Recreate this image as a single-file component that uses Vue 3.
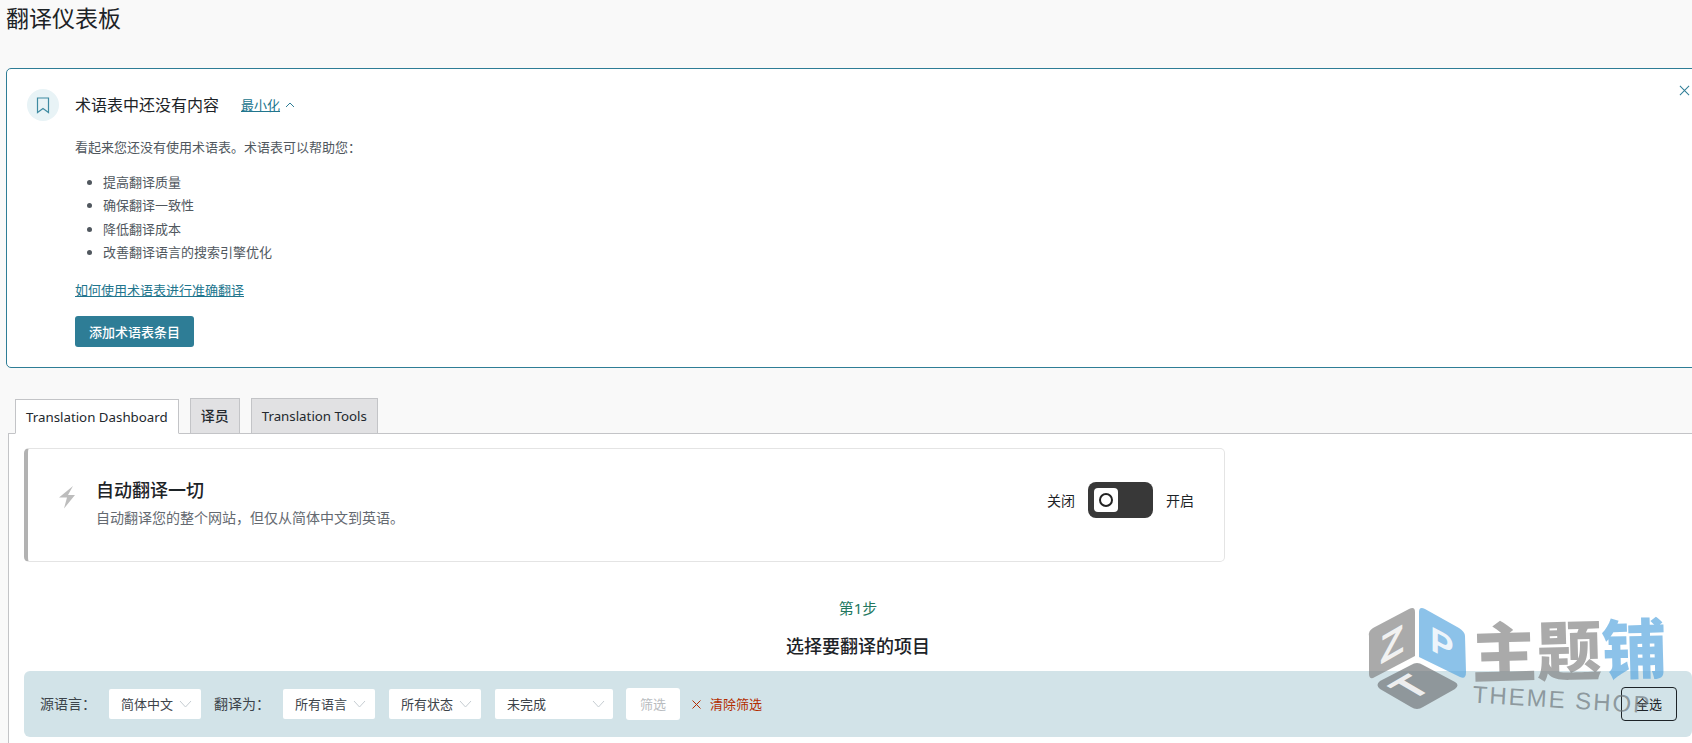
<template>
  <div class="page">
    <h1 class="page-title">翻译仪表板</h1>

    <section class="notice">
      <button class="notice-close" aria-label="关闭">
        <svg width="11" height="11" viewBox="0 0 12 12"><path d="M1 1l10 10M11 1L1 11" /></svg>
      </button>
      <div class="notice-head">
        <span class="notice-icon">
          <svg width="14" height="17" viewBox="0 0 14 17"><path d="M1.500 1h11v14.500L7 11.600 1.500 15.500z" /></svg>
        </span>
        <strong class="notice-title">术语表中还没有内容</strong>
        <a class="link minimize">最小化</a>
        <svg class="minimize-arrow" width="10" height="6" viewBox="0 0 10 6"><path d="M1 5l4-4 4 4" /></svg>
      </div>
      <div class="notice-body">
        <p>看起来您还没有使用术语表。术语表可以帮助您：</p>
        <ul>
          <li v-for="item in benefits" :key="item">{{ item }}</li>
        </ul>
        <a class="link guide">如何使用术语表进行准确翻译</a>
        <button class="primary-btn">添加术语表条目</button>
      </div>
    </section>

    <nav class="tabs">
      <a v-for="tab in tabs" :key="tab.label" class="tab" :class="{ active: tab.active, cjk: tab.cjk }">{{ tab.label }}</a>
    </nav>

    <div class="panel">
      <div class="auto-card">
        <svg class="bolt" width="16" height="23" viewBox="0 0 16 23"><path d="M14 0L0 11.500h8L5 22.500 16 9H9z" /></svg>
        <div class="auto-text">
          <h3>自动翻译一切</h3>
          <p>自动翻译您的整个网站，但仅从简体中文到英语。</p>
        </div>
        <div class="auto-toggle">
          <span>关闭</span>
          <span class="switch"><span class="switch-thumb"><i></i></span></span>
          <span>开启</span>
        </div>
      </div>

      <div class="step">第1步</div>
      <h2 class="step-title">选择要翻译的项目</h2>

      <div class="filter-bar">
        <template v-for="f in filters" :key="f.value">
          <label v-if="f.label" class="filter-label">{{ f.label }}</label>
          <div class="select" :class="{ plain: !f.label, wide: f.wide }">
            <span>{{ f.value }}</span>
            <svg width="13" height="8" viewBox="0 0 13 8"><path d="M1 1l5.500 6L12 1" /></svg>
          </div>
        </template>
        <button class="filter-btn">筛选</button>
        <a class="clear">
          <svg width="9" height="9" viewBox="0 0 9 9"><path d="M0.500 0.500l8 8M8.500 0.500l-8 8" /></svg>
          <span>清除筛选</span>
        </a>
        <button class="select-all">全选</button>
      </div>
    </div>

    <div class="watermark">
      <svg class="wm-logo" width="100" height="106" viewBox="0 0 100 106">
        <path class="wm-grey" d="M2 30Q1 25 6 22L42 3Q48 0 48 6V50L6 72Q2 73 2 68z" />
        <path class="wm-blue" d="M52 6Q52 0 58 3L92 22Q98 26 98 30L99 66Q99 74 93 71L52 51z" />
        <path class="wm-dark" d="M44 59Q50 55 56 59L88 76Q93 79 88 83L56 101Q50 105 44 101L13 83Q8 79 13 75z" />
        <text class="wm-letter" text-anchor="middle" transform="translate(25 38) skewY(-30)" y="14" font-size="40">Z</text>
        <text class="wm-letter" text-anchor="middle" transform="translate(75 38) skewY(28)" y="12" font-size="35">P</text>
        <text class="wm-letter" text-anchor="middle" transform="matrix(0.86 -0.5 0.86 0.5 43 81)" y="15" font-size="43">T</text>
      </svg>
      <div class="wm-text">
        <div class="wm-cn"><span>主题</span><b>铺</b></div>
        <div class="wm-en">THEME SHOP</div>
      </div>
    </div>
  </div>
</template>

<script setup>
const benefits = ['提高翻译质量', '确保翻译一致性', '降低翻译成本', '改善翻译语言的搜索引擎优化']

const tabs = [
  { label: 'Translation Dashboard', active: true },
  { label: '译员', cjk: true },
  { label: 'Translation Tools' }
]

const filters = [
  { label: '源语言：', value: '简体中文' },
  { label: '翻译为：', value: '所有语言' },
  { value: '所有状态' },
  { value: '未完成', wide: true }
]
</script>

<style>
html, body {
  margin: 0;
  background: #f9f9f9;
  overflow: hidden;
}
</style>

<style scoped>
.page {
  position: relative;
  width: 1692px;
  height: 743px;
  overflow: hidden;
  font-family: "Noto Sans", "Noto Sans CJK SC", sans-serif;
  font-size: 13px;
  color: #3c434a;
}
.page-title {
  margin: 0 0 0 6px;
  height: 68px;
  font-size: 23px;
  line-height: 36px;
  font-weight: 400;
  color: #1d2327;
}
.notice {
  position: relative;
  box-sizing: border-box;
  height: 300px;
  margin: 0 -20px 0 6px;
  padding: 20px 20px;
  background: #fff;
  border: 1px solid #2e7d96;
  border-radius: 5px;
}
.notice-close {
  position: absolute;
  top: 16px;
  right: 21px;
  padding: 0;
  border: 0;
  background: none;
  line-height: 0;
}
.notice-close path {
  fill: none;
  stroke: #2e7d96;
  stroke-width: 1.100;
}
.notice-head {
  display: flex;
  align-items: center;
  height: 32px;
}
.notice-icon {
  display: flex;
  align-items: center;
  justify-content: center;
  width: 32px;
  height: 32px;
  margin-right: 16px;
  border-radius: 50%;
  background: #e8f3f6;
}
.notice-icon path {
  fill: none;
  stroke: #3f8ba2;
  stroke-width: 1.200;
}
.notice-title {
  font-size: 16px;
  font-weight: 400;
  color: #1d2327;
  margin: 0 22px 2px 0;
}
.minimize {
  margin-bottom: 2px;
}
.link {
  color: #21758d;
  text-decoration: underline;
}
.minimize-arrow {
  margin-left: 5px;
}
.minimize-arrow path {
  fill: none;
  stroke: #2e7d96;
  stroke-width: 1;
}
.notice-body {
  padding-left: 48px;
  line-height: 20px;
}
.notice-body p {
  margin: 16px 0 13.500px;
  color: #50575e;
}
.notice-body ul {
  margin: 0 0 15.500px;
  padding-left: 28px;
  color: #50575e;
}
.notice-body li {
  height: 23.600px;
  line-height: 23.600px;
}
.guide {
  display: block;
  width: fit-content;
}
.primary-btn {
  display: block;
  width: 119px;
  height: 31px;
  margin-top: 16px;
  border: 0;
  border-radius: 3px;
  background: #2e7d96;
  color: #fff;
  font: 500 13px "Noto Sans CJK SC", sans-serif;
}
.tabs {
  display: flex;
  align-items: flex-end;
  gap: 11px;
  height: 65px;
  padding-left: 15px;
  position: relative;
  z-index: 1;
}
.tab {
  box-sizing: border-box;
  height: 36px;
  margin-bottom: -1px;
  padding: 0 10px;
  border: 1px solid #c3c4c7;
  border-bottom: 1px solid #c3c4c7;
  background: #e1e1e3;
  font-size: 13.300px;
  font-weight: 400;
  line-height: 34px;
  color: #23282d;
}
.tab.cjk {
  font-size: 14px;
  font-weight: 500;
}
.tab.active {
  height: 35px;
  background: #fff;
  border-bottom-color: #fff;
  line-height: 34px;
}
.panel {
  box-sizing: border-box;
  height: 311px;
  margin-left: 8px;
  padding: 14px 0 0 15px;
  background: #fff;
  border-top: 1px solid #c3c4c7;
  border-left: 1px solid #c3c4c7;
}
.auto-card {
  box-sizing: border-box;
  display: flex;
  align-items: center;
  width: 1201px;
  height: 114px;
  padding: 0 30px 10px 31px;
  border: 1px solid #e4e4e4;
  border-left: 4px solid #b2b2b2;
  border-radius: 5px;
}
.bolt {
  margin: 0 21px 6px 0;
}
.bolt path {
  fill: #bdbdbd;
}
.auto-text {
  flex: 1;
  margin-top: 8px;
}
.auto-text h3 {
  margin: 0;
  font-size: 18px;
  font-weight: 500;
  line-height: 28px;
  color: #1d2327;
}
.auto-text p {
  margin: 0;
  font-size: 14px;
  line-height: 28px;
  color: #646970;
}
.auto-toggle {
  display: flex;
  align-items: center;
  gap: 13px;
  font-size: 14px;
  color: #1d2327;
}
.switch {
  box-sizing: border-box;
  display: flex;
  align-items: center;
  width: 65px;
  height: 36px;
  padding-left: 6px;
  border-radius: 8px;
  background: #383838;
}
.switch-thumb {
  display: flex;
  align-items: center;
  justify-content: center;
  width: 24px;
  height: 24px;
  border-radius: 4px;
  background: #fff;
}
.switch-thumb i {
  box-sizing: border-box;
  width: 14px;
  height: 14px;
  border: 2px solid #222;
  border-radius: 50%;
}
.step {
  margin-top: 34px;
  font-size: 15px;
  line-height: 24px;
  text-align: center;
  color: #23785f;
}
.step-title {
  margin: 13px 0 12px;
  font-size: 18px;
  font-weight: 500;
  line-height: 26px;
  text-align: center;
  color: #1d2327;
}
.filter-bar {
  display: flex;
  align-items: center;
  gap: 13px;
  height: 66px;
  padding: 0 15px 0 16px;
  border-radius: 6px;
  background: #d2e3e8;
}
.filter-label {
  width: 56px;
  margin-bottom: 2px;
  font-size: 14px;
  color: #3c434a;
}
.select {
  box-sizing: border-box;
  display: flex;
  align-items: center;
  justify-content: space-between;
  width: 92px;
  height: 30px;
  padding: 0 9px 0 12px;
  border-radius: 2px;
  background: #fff;
  color: #3c434a;
}
.select span {
  margin-bottom: 2px;
}
.select.plain {
  margin-left: 1px;
}
.select.wide {
  width: 118px;
  padding-right: 8px;
}
.select path {
  fill: none;
  stroke: #c6cdd2;
  stroke-width: 1;
}
.filter-btn {
  width: 54px;
  height: 32px;
  padding: 0 0 2px;
  border: 0;
  border-radius: 3px;
  background: #fff;
  color: #b9bcc0;
  font: 13px "Noto Sans CJK SC", sans-serif;
}
.clear {
  display: flex;
  align-items: center;
  gap: 9px;
  color: #b32d00;
}
.clear svg {
  margin-left: -1px;
}
.clear span {
  margin-bottom: 2px;
}
.clear path {
  fill: none;
  stroke: #b32d00;
  stroke-width: 1;
}
.select-all {
  width: 56px;
  height: 34px;
  margin-left: auto;
  padding: 0 0 2px;
  border: 1px solid #1d2327;
  border-radius: 4px;
  background: transparent;
  color: #1d2327;
  font: 13px "Noto Sans CJK SC", sans-serif;
}
/* 水印，盖在页面上 */
.watermark {
  position: absolute;
  left: 1367px;
  top: 606px;
  display: flex;
  gap: 5px;
  pointer-events: none;
}
.wm-logo {
  overflow: visible;
}
.wm-grey {
  fill: rgba(125, 125, 125, 0.65);
}
.wm-blue {
  fill: rgba(85, 165, 222, 0.68);
}
.wm-dark {
  fill: rgba(110, 115, 118, 0.68);
}
.wm-letter {
  fill: rgba(255, 255, 255, 0.85);
  font-family: "Liberation Sans", sans-serif;
  font-weight: 700;
}
.wm-text {
  transform: rotate(-1.500deg);
  margin-top: 6px;
}
.wm-cn {
  display: flex;
  height: 70px;
  font-family: "Noto Sans CJK SC", sans-serif;
  font-size: 65px;
  font-weight: 900;
  line-height: 70px;
  color: rgba(125, 125, 125, 0.65);
}
.wm-cn b {
  font-weight: 900;
  color: rgba(85, 165, 222, 0.68);
}
.wm-en {
  margin-top: -3px;
  font-family: "Liberation Sans", sans-serif;
  font-size: 24px;
  letter-spacing: 2px;
  line-height: 26px;
  color: rgba(110, 120, 125, 0.7);
  transform: rotate(5deg);
  transform-origin: left center;
}
</style>
